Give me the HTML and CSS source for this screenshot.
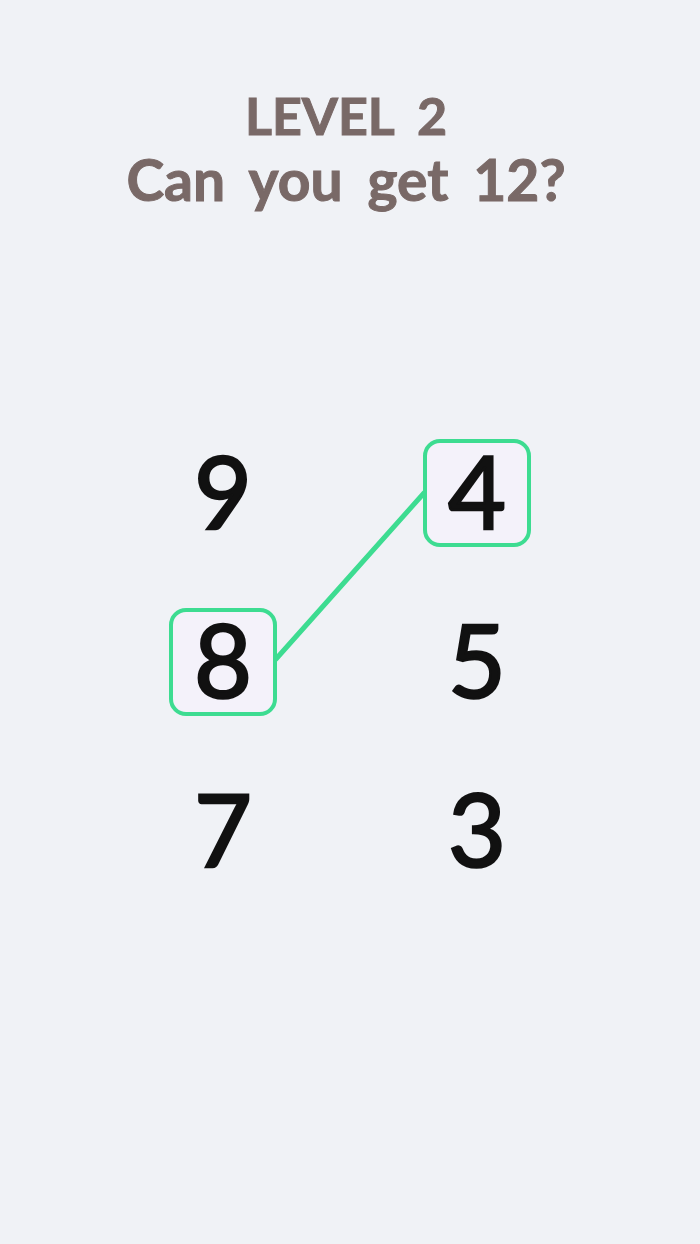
FILE: index.html
```html
<!DOCTYPE html>
<html lang="en">

<head>
    <meta charset="UTF-8">
    <meta name="viewport" content="width=device-width, initial-scale=1.0">
    <title>Level 2</title>
    <link rel="stylesheet" href="styles.css">
</head>

<body>
    <header class="level-title">
        <div class="level-name">LEVEL 2</div>
        <div class="level-goal">Can you get 12?</div>
    </header>

    <main class="board">
        <!-- link between the two picked tiles -->
        <svg class="link" width="362" height="446" viewBox="0 0 362 446">
            <line x1="107" y1="220" x2="255" y2="54" stroke="#3ddc91" stroke-width="5" stroke-linecap="round" />
        </svg>

        <div class="tile">9</div>
        <div class="tile picked">4</div>
        <div class="tile picked">8</div>
        <div class="tile">5</div>
        <div class="tile">7</div>
        <div class="tile">3</div>
    </main>
</body>

</html>
```

FILE: styles.css
```css
body {
    margin: 0;
    background-color: #f0f2f6;
    font-family: "Lato", "Noto Sans", sans-serif;
}

.level-title {
    padding-top: 84px;
    padding-right: 8px;
    text-align: center;
    color: #796967;
    font-weight: 700;
    word-spacing: 11px;
    -webkit-text-stroke: 1px #796967;
}

.level-name {
    font-size: 52px;
    line-height: 62px;
}

.level-goal {
    font-size: 57px;
    line-height: 66px;
}

.board {
    position: relative;
    width: 362px;
    margin: 227px auto 0;
    display: grid;
    grid-template-columns: 108px 108px;
    justify-content: space-between;
    row-gap: 61px;
}

.link {
    position: absolute;
    left: 0;
    top: 0;
}

.tile {
    position: relative;
    width: 108px;
    height: 108px;
    box-sizing: border-box;
    display: flex;
    align-items: center;
    justify-content: center;
    padding-bottom: 6px;
    font-size: 100px;
    font-weight: 400;
    color: #111;
    -webkit-text-stroke: 2.5px #111;
    border: 4px solid transparent;
    border-radius: 17px;
}

.tile.picked {
    background-color: #f4f2fa;
    border-color: #3ddc91;
}
```
